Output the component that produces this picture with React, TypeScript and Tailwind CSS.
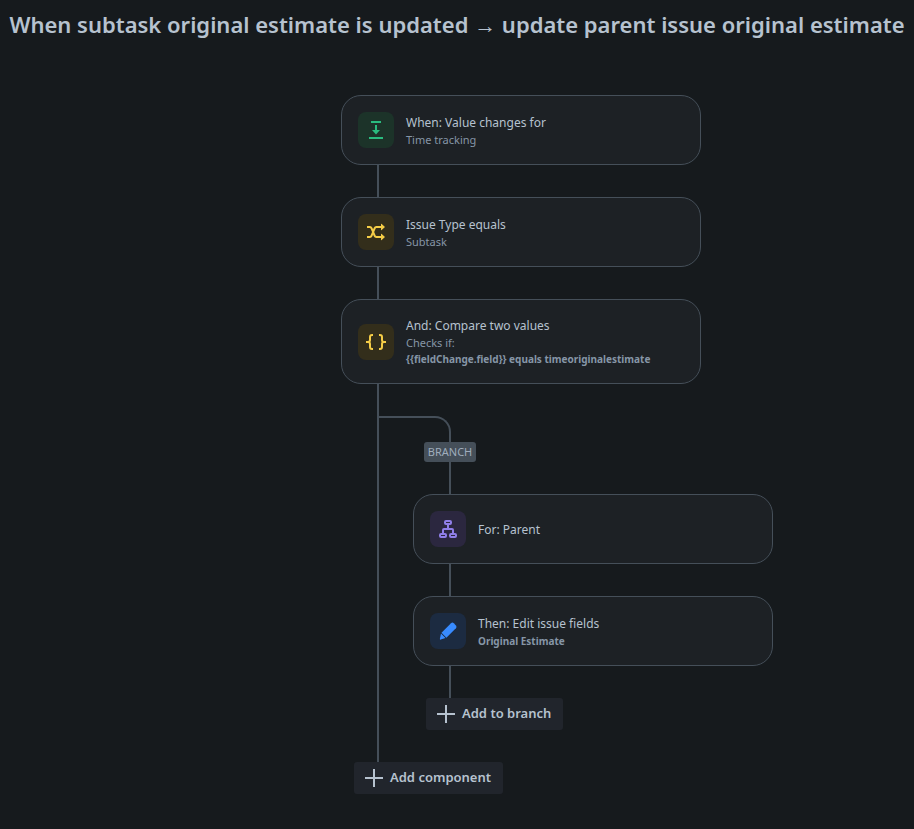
import type { ReactNode } from "react";

type Tone = "green" | "yellow" | "purple" | "blue";

const tones: Record<Tone, string> = {
  green: "bg-[#1c3329] text-[#2abb7f]",
  yellow: "bg-[#332e1b] text-[#f5cd47]",
  purple: "bg-[#2b273f] text-[#8f7ee7]",
  blue: "bg-[#1c2b41] text-[#388bff]",
};

const TriggerIcon = () => (
  <svg viewBox="0 0 24 24" className="size-6" fill="currentColor" aria-hidden="true">
    <path d="M7 3h10v2H7zM11 7h2v5h3l-4 4.5L8 12h3zM5 19h14v2H5z" />
  </svg>
);

const ShuffleIcon = () => (
  <svg viewBox="0 0 24 24" className="size-6" aria-hidden="true">
    <g fill="none" stroke="currentColor" strokeWidth="2">
      <path d="M3 7h2.9c.8 0 1.3.4 1.6 1.1l3.2 7.8c.3.7.8 1.1 1.6 1.1H18" />
      <path d="M3 17h2.9c.8 0 1.3-.4 1.6-1.1l3.2-7.8c.3-.7.8-1.1 1.6-1.1H18" />
    </g>
    <path fill="currentColor" d="M17 4.2v5.6a.4.4 0 0 0 .7.3L21 7l-3.3-3.1a.4.4 0 0 0-.7.3zM17 14.2v5.6a.4.4 0 0 0 .7.3L21 17l-3.3-3.1a.4.4 0 0 0-.7.3z" />
  </svg>
);

const BracesIcon = () => (
  <svg viewBox="0 0 24 24" className="size-6" fill="none" stroke="currentColor" strokeWidth="2" aria-hidden="true">
    <path d="M9 5H8a2 2 0 0 0-2 2v3a2 2 0 0 1-2 2H2h2a2 2 0 0 1 2 2v3a2 2 0 0 0 2 2h1" />
    <path d="M15 5h1a2 2 0 0 1 2 2v3a2 2 0 0 0 2 2h2h-2a2 2 0 0 0-2 2v3a2 2 0 0 1-2 2h-1" />
  </svg>
);

const HierarchyIcon = () => (
  <svg viewBox="0 0 24 24" className="size-6" fill="none" stroke="currentColor" strokeWidth="2" aria-hidden="true">
    <rect x="9" y="4" width="6" height="3" rx="1" />
    <rect x="4" y="17" width="6" height="3" rx="1" />
    <rect x="14" y="17" width="6" height="3" rx="1" />
    <path d="M12 7v5M7 17v-4a1 1 0 0 1 1-1h8a1 1 0 0 1 1 1v4" />
  </svg>
);

const PencilIcon = () => (
  <svg viewBox="0 0 24 24" className="size-6" fill="currentColor" aria-hidden="true">
    <path d="M15 4.3a2 2 0 0 1 2.8 0l2.1 2.1a2 2 0 0 1 0 2.8l-9.5 9.5-4.9-4.9z" />
    <path d="M5 14.6l4.5 4.5-4.8 1.5a.6.6 0 0 1-.8-.8z" />
  </svg>
);

const PlusIcon = () => (
  <svg viewBox="0 0 24 24" className="size-6" fill="currentColor" aria-hidden="true">
    <path d="M11 3h2v8h8v2h-8v8h-2v-8H3v-2h8z" />
  </svg>
);

interface RuleCardProps {
  tone: Tone;
  icon: ReactNode;
  title: string;
  children?: ReactNode;
}

const RuleCard = ({ tone, icon, title, children }: RuleCardProps) => (
  <section className="flex w-[360px] items-center gap-3 rounded-[20px] border border-[#454f59] bg-[#1d2125] p-4">
    <div className={`flex size-9 shrink-0 items-center justify-center rounded-lg ${tones[tone]}`}>
      {icon}
    </div>
    <div className="text-[11px] leading-4 text-[#8696a7]">
      <h2 className="text-xs leading-[19px] text-[#b6c2cf]">{title}</h2>
      {children}
    </div>
  </section>
);

// Vertical line between two steps
const Connector = () => <div className="ml-9 h-8 w-0.5 bg-[#454f59]" />;

const AddButton = ({ label }: { label: string }) => (
  <button
    type="button"
    className="ml-[13px] flex h-8 items-center gap-1 rounded-[3px] bg-[#21252c] pr-3 pl-2 text-[13px] font-semibold text-[#b6c2cf]"
  >
    <PlusIcon />
    {label}
  </button>
);

const App = () => (
  <div className="min-h-screen bg-[#161a1d] pb-8 font-['Noto_Sans',sans-serif]">
    <h1 className="py-2 text-center text-[22px] leading-8 font-semibold text-[#b6c2cf]">
      When subtask original estimate is updated → update parent issue original estimate
    </h1>

    <main className="flex justify-center pt-[47px] pl-[200px]">
      <div className="w-[432px]">
        <RuleCard tone="green" icon={<TriggerIcon />} title="When: Value changes for">
          <p>Time tracking</p>
        </RuleCard>
        <Connector />
        <RuleCard tone="yellow" icon={<ShuffleIcon />} title="Issue Type equals">
          <p>Subtask</p>
        </RuleCard>
        <Connector />
        <RuleCard tone="yellow" icon={<BracesIcon />} title="And: Compare two values">
          <p>Checks if:</p>
          <p className="text-[10px] leading-4 font-bold">{"{{fieldChange.field}} equals timeoriginalestimate"}</p>
        </RuleCard>

        {/* Branch hangs off the main line */}
        <div className="ml-9 border-l-2 border-[#454f59] py-8">
          <div className="h-[26px] w-[72px] rounded-tr-2xl border-t-2 border-r-2 border-[#454f59]" />
          <div className="ml-[34px]">
            <div className="ml-[11px] flex h-5 w-[52px] items-center justify-center rounded-[3px] bg-[#454f59] text-[11px] text-[#9fadbc]">
              BRANCH
            </div>
            <Connector />
            <RuleCard tone="purple" icon={<HierarchyIcon />} title="For: Parent" />
            <Connector />
            <RuleCard tone="blue" icon={<PencilIcon />} title="Then: Edit issue fields">
              <p className="text-[10px] leading-4 font-bold">Original Estimate</p>
            </RuleCard>
            <Connector />
            <AddButton label="Add to branch" />
          </div>
        </div>
        <AddButton label="Add component" />
      </div>
    </main>
  </div>
);

export default App;
